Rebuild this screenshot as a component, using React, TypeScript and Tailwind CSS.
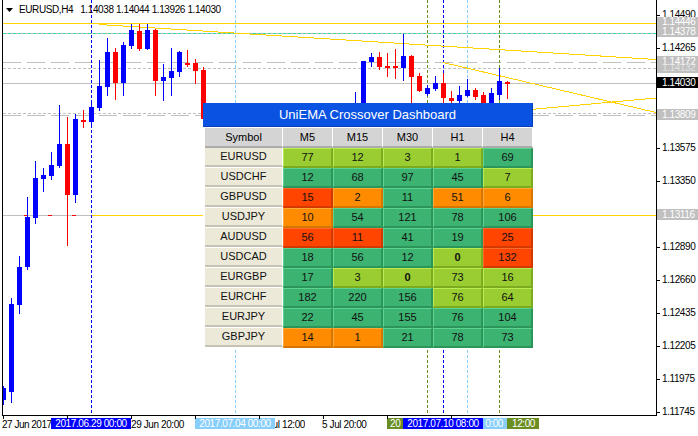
import React from "react";

type Candle = [number, number, number, number, number, "b" | "r"];

// x center, body top, body bottom, wick top, wick bottom, colour
const candles: Candle[] = [
  [3, 388, 400, 386, 405, "b"],
  [11, 304, 392, 298, 403, "b"],
  [19, 267, 305, 256, 314, "b"],
  [27, 217, 267, 197, 270, "b"],
  [35, 178, 218, 161, 224, "b"],
  [43, 175, 179, 168, 192, "b"],
  [51, 165, 176, 152, 180, "b"],
  [59, 144, 166, 105, 168, "b"],
  [67, 144, 195, 117, 246, "r"],
  [75, 119, 195, 114, 203, "b"],
  [83, 120, 122, 110, 128, "r"],
  [91, 107, 122, 103, 126, "b"],
  [99, 86, 108, 60, 111, "b"],
  [107, 52, 87, 38, 96, "b"],
  [115, 52, 83, 48, 100, "r"],
  [123, 45, 83, 42, 96, "b"],
  [131, 30, 46, 24, 49, "b"],
  [139, 31, 49, 24, 51, "r"],
  [147, 30, 49, 24, 50, "b"],
  [155, 30, 81, 29, 96, "r"],
  [163, 77, 81, 64, 101, "b"],
  [171, 71, 78, 48, 96, "b"],
  [179, 52, 72, 51, 77, "b"],
  [187, 63, 65, 50, 67, "r"],
  [195, 63, 71, 59, 84, "r"],
  [203, 70, 119, 67, 119, "r"],
  [355, 104, 110, 92, 110, "b"],
  [363, 61, 110, 61, 110, "b"],
  [371, 57, 62, 53, 67, "b"],
  [379, 57, 67, 52, 70, "r"],
  [387, 66, 68, 53, 77, "r"],
  [395, 66, 68, 49, 79, "r"],
  [403, 56, 68, 34, 81, "b"],
  [411, 56, 77, 55, 110, "r"],
  [419, 76, 91, 73, 92, "r"],
  [427, 88, 94, 85, 96, "b"],
  [435, 83, 89, 76, 91, "b"],
  [443, 83, 98, 73, 104, "r"],
  [451, 98, 101, 91, 105, "r"],
  [459, 95, 101, 86, 105, "b"],
  [467, 90, 96, 79, 97, "b"],
  [475, 90, 97, 88, 100, "r"],
  [483, 95, 105, 92, 105, "r"],
  [491, 93, 105, 88, 105, "b"],
  [499, 81, 95, 68, 100, "b"],
  [507, 82, 84, 81, 99, "r"],
];

const priceTicks: [string, number][] = [
  ["1.14490", 15],
  ["1.14265", 48],
  ["1.13575", 148],
  ["1.13350", 181],
  ["1.12890", 247],
  ["1.12660", 280],
  ["1.12435", 313],
  ["1.12205", 346],
  ["1.11975", 379],
  ["1.11745", 412],
];

type Cell = [number | "0", "g" | "y" | "r" | "o"];
const rows: [string, Cell[]][] = [
  ["EURUSD", [[77, "y"], [12, "y"], [3, "y"], [1, "y"], [69, "g"]]],
  ["USDCHF", [[12, "g"], [68, "g"], [97, "g"], [45, "g"], [7, "y"]]],
  ["GBPUSD", [[15, "r"], [2, "o"], [11, "g"], [51, "o"], [6, "o"]]],
  ["USDJPY", [[10, "o"], [54, "g"], [121, "g"], [78, "g"], [106, "g"]]],
  ["AUDUSD", [[56, "r"], [11, "r"], [41, "g"], [19, "g"], [25, "r"]]],
  ["USDCAD", [[18, "g"], [56, "g"], [12, "g"], ["0", "y"], [132, "r"]]],
  ["EURGBP", [[17, "g"], [3, "y"], ["0", "y"], [73, "y"], [16, "y"]]],
  ["EURCHF", [[182, "g"], [220, "g"], [156, "g"], [76, "y"], [64, "y"]]],
  ["EURJPY", [[22, "g"], [45, "g"], [155, "g"], [76, "g"], [104, "g"]]],
  ["GBPJPY", [[14, "o"], [1, "o"], [21, "g"], [78, "g"], [73, "g"]]],
];

const cellClass = {
  g: "bg-[#3cb371] border-t-[#5cd490] border-l-[#5cd490] border-b-[#2b955a] border-r-[#2b955a]",
  y: "bg-[#9acd32] border-t-[#b8ec50] border-l-[#b8ec50] border-b-[#7cab20] border-r-[#7cab20]",
  r: "bg-[#ff4500] border-t-[#ff6a2c] border-l-[#ff6a2c] border-b-[#d33800] border-r-[#d33800]",
  o: "bg-[#ff8c00] border-t-[#ffa938] border-l-[#ffa938] border-b-[#d67500] border-r-[#d67500]",
};

const Dashboard = () => (
  <div className="absolute left-[200px] top-[103px] w-[330px] bg-white tracking-normal">
    <div className="h-[24px] bg-[#0a53e2] border-r border-b border-[#0840b8] text-white text-[13px] flex items-center justify-center">
      UniEMA Crossover Dashboard
    </div>
    <div className="flex h-[20px] mt-px pl-[2px] text-[11px] text-black">
      <div className="w-[78px] bg-[#d4d4d4] border-b-2 border-b-[#ababab] border-r border-r-white flex items-center justify-center">
        Symbol
      </div>
      {["M5", "M15", "M30", "H1", "H4"].map((t) => (
        <div
          key={t}
          className="w-[50px] bg-[#d4d4d4] border-b-2 border-b-[#ababab] border-r border-r-white flex items-center justify-center"
        >
          {t}
        </div>
      ))}
    </div>
    {rows.map(([sym, cells]) => (
      <div key={sym} className="flex h-[20px] pl-[2px] text-[11px] text-[#111]">
        <div className="w-[78px] h-[19px] bg-[#ece9d8] border-b-2 border-b-[#c6c2b4] border-r border-r-white flex items-center justify-center">
          {sym}
        </div>
        {cells.map(([v, c], i) => (
          <div
            key={i}
            className={`w-[50px] h-[20px] border-t border-l border-b-2 border-r-2 flex items-center justify-center ${cellClass[c]}`}
          >
            {v === "0" ? <span className="font-black text-[11px]">0</span> : v}
          </div>
        ))}
      </div>
    ))}
  </div>
);

const ChartSvg = () => (
  <svg
    className="absolute left-0 top-0"
    width={653}
    height={415}
    viewBox="3 0 653 415"
    shapeRendering="crispEdges"
  >
    {/* horizontal levels */}
    <line x1={3} x2={656} y1={33.5} y2={33.5} stroke="#c0c0c0" />
    <line x1={3} x2={656} y1={33.5} y2={33.5} stroke="#36dc9c" strokeDasharray="3 2" />
    <line x1={3} x2={656} y1={62.5} y2={62.5} stroke="#c0c0c0" strokeDasharray="18 6" />
    <line x1={3} x2={656} y1={68.5} y2={68.5} stroke="#c0c0c0" strokeDasharray="3 2" />
    <line x1={3} x2={656} y1={83.5} y2={83.5} stroke="#c0c0c0" />
    <line x1={3} x2={656} y1={113.5} y2={113.5} stroke="#c0c0c0" strokeDasharray="3 2" />
    <line x1={3} x2={656} y1={115.5} y2={115.5} stroke="#c0c0c0" strokeDasharray="18 6" />
    <line x1={3} x2={91} y1={215.5} y2={215.5} stroke="#c0c0c0" />
    <line x1={91} x2={656} y1={215.5} y2={215.5} stroke="#ffd200" />
    <rect x={24} y={215} width={4} height={1} fill="#ff0000" />
    <rect x={48} y={215} width={4} height={1} fill="#ff0000" />
    <rect x={72} y={215} width={4} height={1} fill="#ff0000" />
    <line x1={3} x2={656} y1={23.5} y2={23.5} stroke="#ffd200" />

    {/* vertical markers */}
    <line x1={91.5} x2={91.5} y1={0} y2={415} stroke="#0000ff" strokeDasharray="3 2" />
    <line x1={235.5} x2={235.5} y1={0} y2={415} stroke="#87cefa" strokeDasharray="3 2" />
    <line x1={427.5} x2={427.5} y1={0} y2={415} stroke="#6b8e23" strokeDasharray="3 2" />
    <line x1={443.5} x2={443.5} y1={0} y2={415} stroke="#0000ff" strokeDasharray="3 2" />
    <line x1={467.5} x2={467.5} y1={0} y2={415} stroke="#87cefa" strokeDasharray="3 2" />
    <line x1={499.5} x2={499.5} y1={0} y2={415} stroke="#6b8e23" strokeDasharray="3 2" />

    {/* trend lines */}
    <line x1={99} y1={24.5} x2={656} y2={59.5} stroke="#ffd200" />
    <line x1={443} y1={62.5} x2={656} y2={112.5} stroke="#ffd200" />
    <line x1={520} y1={110.5} x2={656} y2={98} stroke="#ffd200" />

    {candles.map(([x, bt, bb, wt, wb, c], i) => {
      const col = c === "b" ? "#0000ff" : "#ff0000";
      return (
        <g key={i} fill={col}>
          <rect x={x} y={wt} width={1} height={wb - wt} />
          <rect x={x - 2} y={bt} width={5} height={Math.max(2, bb - bt)} />
        </g>
      );
    })}
  </svg>
);

// a time-axis label, clipped to the part that the neighbouring labels leave visible
const TimeLabel = ({
  text,
  w,
  cls = "",
  align = "justify-start",
}: {
  text: string;
  w: string;
  cls?: string;
  align?: string;
}) => (
  <div className={`h-[11px] flex overflow-hidden whitespace-nowrap leading-[11px] shrink-0 ${w} ${align} ${cls}`}>
    <span className="shrink-0">{text}</span>
  </div>
);

const App = () => {
  return (
    <div className="w-[698px] h-[436px] bg-white flex flex-col overflow-hidden font-['Liberation_Sans',Arial,sans-serif] text-[10px] tracking-[-0.4px] text-black">
      <div className="flex h-[416px]">
        <div className="w-[2px]" />
        <div className="relative w-[655px] h-[416px] border-l border-r border-b border-black overflow-hidden">
          <ChartSvg />
          <div className="absolute left-[3px] top-[4px] flex items-center gap-[6px] leading-[12px]">
            <svg width="7" height="4" viewBox="0 0 7 4">
              <polygon points="0,0 7,0 3.5,4" fill="#000" />
            </svg>
            <span>EURUSD,H4</span>
            <span className="ml-[1px]">1.14038 1.14044 1.13926 1.14030</span>
          </div>
          <Dashboard />
        </div>
        <div className="relative flex-1">
          {priceTicks.map(([t, y]) => (
            <React.Fragment key={t}>
              <div className="absolute left-0 w-[3px] h-px bg-black" style={{ top: y }} />
              <div className="absolute left-[5px] leading-[11px]" style={{ top: y - 6 }}>
                {t}
              </div>
            </React.Fragment>
          ))}
          <div className="absolute left-0 right-0 top-[17px] flex flex-col text-white">
            <div className="h-[10px] bg-[#c0c0c0] pl-[5px] leading-[10px]">1.14446</div>
            <div className="h-[10px] bg-[#c0c0c0] pl-[5px] leading-[10px]">1.14378</div>
          </div>
          <div className="absolute left-0 right-0 top-[56px] h-[17px] bg-[#c0c0c0] text-white pl-[5px] leading-[11px] overflow-hidden">
            1.14172
            <div className="text-[#e0e0e0] -mt-[5px]">1.14132</div>
          </div>
          <div className="absolute left-0 right-0 top-[77px] h-[11px] bg-black text-white pl-[5px] leading-[11px]">1.14030</div>
          <div className="absolute left-0 right-0 top-[109px] h-[11px] bg-[#c0c0c0] text-white pl-[5px] leading-[11px]">1.13809</div>
          <div className="absolute left-0 right-0 top-[209px] h-[11px] bg-[#c0c0c0] text-white pl-[5px] leading-[11px]">1.13116</div>
        </div>
      </div>
      <div className="relative h-[20px]">
        {[3, 67, 131, 195, 259, 323, 387, 451].map((x) => (
          <div key={x} className="absolute top-0 w-px h-[3px] bg-black" style={{ left: x }} />
        ))}
        <div className="flex pt-[2px] pl-[2px] text-white">
          <TimeLabel text="27 Jun 2017" w="w-[49px]" cls="text-black mt-px tracking-[-0.5px]" />
          <TimeLabel text="2017.06.29 00:00" w="w-[80px]" cls="bg-[#0000ff]" align="justify-center" />
          <TimeLabel text="29 Jun 20:00" w="w-[64px]" cls="text-black mt-px" />
          <TimeLabel text="2017.07.04 00:00" w="w-[80px]" cls="bg-[#87cefa]" align="justify-center" />
          <TimeLabel text="4 Jul 12:00" w="w-[30px]" cls="text-black mt-px" align="justify-end" />
          <TimeLabel text="5 Jul 20:00" w="w-[48px]" cls="text-black mt-px ml-[17px]" />
          <TimeLabel text="20" w="w-[16px]" cls="bg-[#6b8e23] pl-[3px] ml-[17px]" />
          <TimeLabel text="2017.07.10 08:00" w="w-[80px]" cls="bg-[#0000ff]" align="justify-center" />
          <TimeLabel text="0:00" w="w-[24px]" cls="bg-[#87cefa] pr-[4px]" align="justify-end" />
          <TimeLabel text="12:00" w="w-[32px]" cls="bg-[#6b8e23] pr-[4px]" align="justify-end" />
        </div>
      </div>
    </div>
  );
};

export default App;
